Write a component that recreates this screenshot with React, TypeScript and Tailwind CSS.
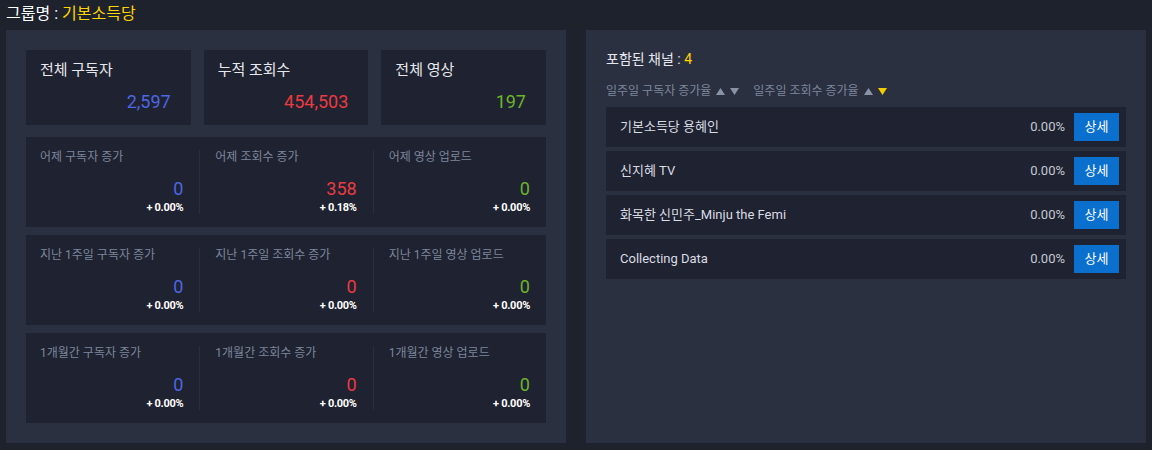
import React from "react";

const TOP_CARDS = [
  { title: "전체 구독자", value: "2,597", color: "text-[#4d66e3]" },
  { title: "누적 조회수", value: "454,503", color: "text-[#ea3b40]" },
  { title: "전체 영상", value: "197", color: "text-[#6bb52b]" },
];

const STAT_ROWS = [
  [
    { label: "어제 구독자 증가", value: "0", pct: "+ 0.00%", color: "text-[#4d66e3]" },
    { label: "어제 조회수 증가", value: "358", pct: "+ 0.18%", color: "text-[#ea3b40]" },
    { label: "어제 영상 업로드", value: "0", pct: "+ 0.00%", color: "text-[#6bb52b]" },
  ],
  [
    { label: "지난 1주일 구독자 증가", value: "0", pct: "+ 0.00%", color: "text-[#4d66e3]" },
    { label: "지난 1주일 조회수 증가", value: "0", pct: "+ 0.00%", color: "text-[#ea3b40]" },
    { label: "지난 1주일 영상 업로드", value: "0", pct: "+ 0.00%", color: "text-[#6bb52b]" },
  ],
  [
    { label: "1개월간 구독자 증가", value: "0", pct: "+ 0.00%", color: "text-[#4d66e3]" },
    { label: "1개월간 조회수 증가", value: "0", pct: "+ 0.00%", color: "text-[#ea3b40]" },
    { label: "1개월간 영상 업로드", value: "0", pct: "+ 0.00%", color: "text-[#6bb52b]" },
  ],
];

const CHANNELS = [
  { name: "기본소득당 용혜인", rate: "0.00%" },
  { name: "신지혜 TV", rate: "0.00%" },
  { name: "화목한 신민주_Minju the Femi", rate: "0.00%" },
  { name: "Collecting Data", rate: "0.00%" },
];

const Triangle = ({ down, active }: { down?: boolean; active?: boolean }) => (
  <svg width="9" height="7" viewBox="0 0 9 7" className="inline-block">
    <polygon
      points={down ? "0,0 9,0 4.5,7" : "4.5,0 9,7 0,7"}
      fill={active ? "#f5cc00" : "#8a93a6"}
    />
  </svg>
);

export default function App() {
  return (
    <div className="w-[1152px] h-[450px] bg-[#1e222d] px-[6px] font-['Roboto','Noto_Sans_CJK_KR',sans-serif] overflow-hidden">
      {/* header */}
      <div className="h-[30px] flex items-center pb-[3px] text-[16px] leading-none text-white">
        그룹명 : <span className="ml-1 text-[#ffd400]">기본소득당</span>
      </div>

      <div className="flex gap-5">
        {/* left: stats */}
        <div className="w-[560px] h-[413px] bg-[#2a3040] p-5 flex flex-col">
          <div className="grid grid-cols-3 gap-[13px]">
            {TOP_CARDS.map((c) => (
              <div key={c.title} className="h-[75px] bg-[#1f2230] pl-[14px] pr-5 pt-[11px] flex flex-col">
                <span className="text-[15px] leading-[18px] text-[#e6e8ed]">{c.title}</span>
                <span className={`mt-[12px] text-right text-[18px] leading-[22px] ${c.color}`}>{c.value}</span>
              </div>
            ))}
          </div>

          <div className="mt-3 flex flex-col gap-2">
            {STAT_ROWS.map((row, i) => (
              <div key={i} className="h-[90px] bg-[#1f2230] py-[13px] grid grid-cols-3">
                {row.map((s, j) => (
                  <div
                    key={s.label}
                    className={`flex flex-col pr-4 ${j === 0 ? "pl-[14px]" : "pl-[15px] border-l border-[#2b2f3b]"}`}
                  >
                    <span className="text-[12px] leading-[14px] text-[#7c869b]">{s.label}</span>
                    <span className={`mt-auto text-right text-[18px] leading-[20px] ${s.color}`}>{s.value}</span>
                    <span className="mt-[2px] text-right text-[11px] leading-[13px] font-bold text-white tracking-[-0.3px]">
                      {s.pct}
                    </span>
                  </div>
                ))}
              </div>
            ))}
          </div>
        </div>

        {/* right: channels */}
        <div className="w-[560px] h-[413px] bg-[#2a3040] px-5 pt-[20px]">
          <div className="text-[14px] leading-[18px] text-[#e6e8ed]">
            포함된 채널 : <span className="text-[#ffd400]">4</span>
          </div>

          <div className="mt-[16px] flex items-center text-[12px] leading-[14px] text-[#7c869b]">
            <span>일주일 구독자 증가율</span>
            <span className="ml-[5px] flex items-center gap-[5px]">
              <Triangle />
              <Triangle down />
            </span>
            <span className="ml-[14px]">일주일 조회수 증가율</span>
            <span className="ml-[5px] flex items-center gap-[5px]">
              <Triangle />
              <Triangle down active />
            </span>
          </div>

          <div className="mt-[9px] flex flex-col gap-1">
            {CHANNELS.map((ch) => (
              <div key={ch.name} className="h-10 bg-[#1f2230] pl-[14px] pr-[7px] flex items-center">
                <span className="flex-1 text-[13px] text-[#d9dce3]">{ch.name}</span>
                <span className="text-[13px] text-[#c3c8d2]">{ch.rate}</span>
                <button className="ml-[9px] w-[45px] h-7 bg-[#0b6fce] text-white text-[13px]">상세</button>
              </div>
            ))}
          </div>
        </div>
      </div>
    </div>
  );
}
